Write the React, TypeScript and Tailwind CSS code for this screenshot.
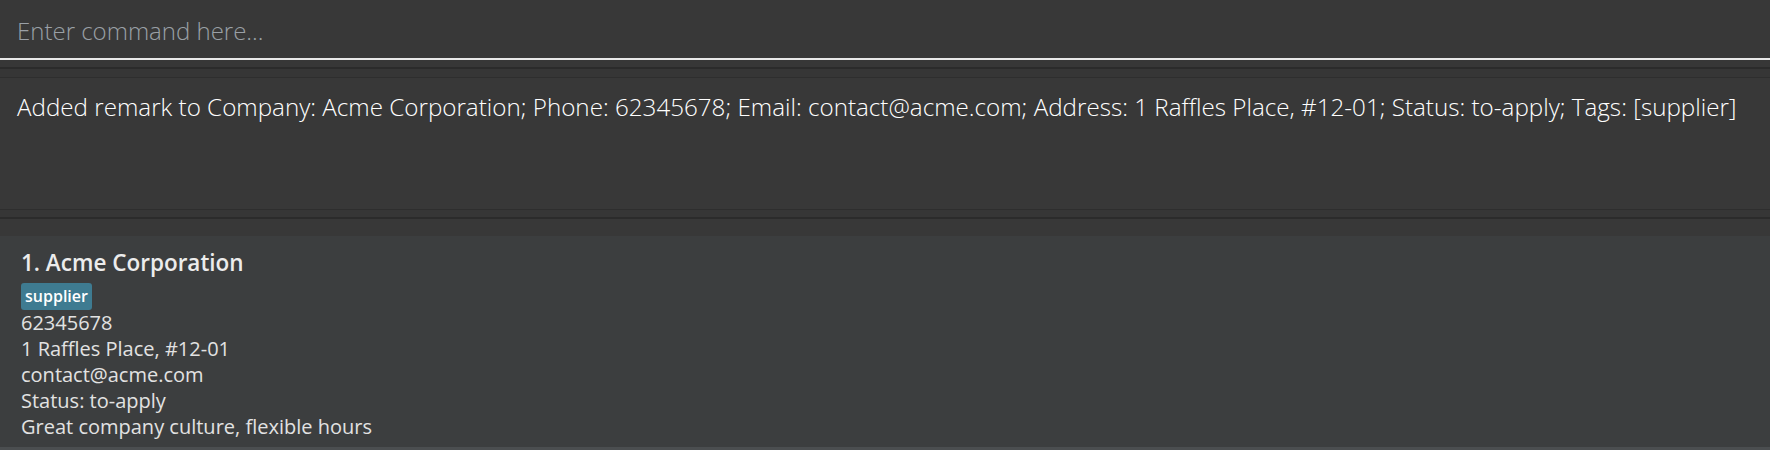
const resultText =
  'Added remark to Company: Acme Corporation; Phone: 62345678; Email: contact@acme.com; Address: 1 Raffles Place, #12-01; Status: to-apply; Tags: [supplier]';

function CompanyCard() {
  return (
    <div className="bg-[#3c3e3f] pl-[21px] pt-[13px] flex-1 border-b-[3px] border-[#4b4e50]">
      <div className="text-[22.5px] leading-[28px] font-semibold text-[#ececec]">1. Acme Corporation</div>
      <div className="flex mt-[6px]">
        <span className="bg-[#3e7b91] text-white text-[16px] font-semibold leading-[27px] px-[4px] rounded-[3px]">
          supplier
        </span>
      </div>
      <div className="text-[20px] leading-[25.9px] text-[#e2e2e2]">
        <div>62345678</div>
        <div>1 Raffles Place, #12-01</div>
        <div>contact@acme.com</div>
        <div>Status: to-apply</div>
        <div>Great company culture, flexible hours</div>
      </div>
    </div>
  );
}

export default function App() {
  return (
    <div className="w-[1770px] h-[450px] bg-[#383838] flex flex-col overflow-hidden font-['Open_Sans',sans-serif]">
      <div className="h-[60px] border-b-2 border-[#e8e8e8] flex items-center pl-[17px] pt-[4px] shrink-0">
        <span className="text-[24px] font-light text-[#9aa0a6]">Enter command here...</span>
      </div>
      <div className="h-[7px] bg-[#373737] shrink-0" />
      <div className="h-[2px] bg-[#2b2b2b] shrink-0" />
      <div className="h-[8px] bg-[#363636] shrink-0" />
      <div className="h-[1px] bg-[#2e2e2e] shrink-0" />
      <div className="h-[131px] px-[17px] pt-[14px] shrink-0">
        <div className="text-[24.2px] font-light text-white leading-[30px] whitespace-nowrap">{resultText}</div>
      </div>
      <div className="h-[1px] bg-[#2e2e2e] shrink-0" />
      <div className="h-[7px] bg-[#363636] shrink-0" />
      <div className="h-[2px] bg-[#2b2b2b] shrink-0" />
      <div className="h-[17px] bg-[#383838] shrink-0" />
      <CompanyCard />
    </div>
  );
}
